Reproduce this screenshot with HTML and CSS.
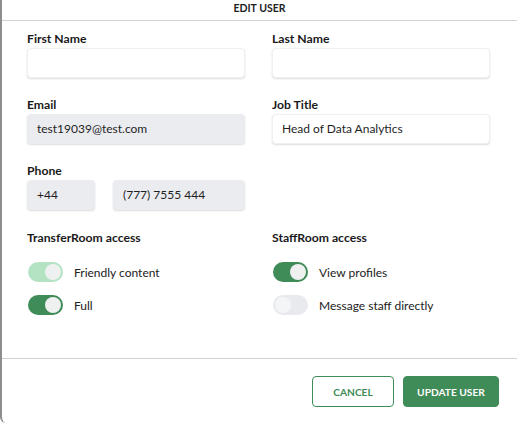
FILE: index.html
```html
<!DOCTYPE html>
<html>
<head>
<meta charset="utf-8">
<link rel="stylesheet" href="styles.css">
</head>
<body>
<div class="modal">
  <div class="header">EDIT USER</div>
  <div class="form">
    <div class="row">
      <div class="field">
        <div class="label">First Name</div>
        <div class="input"></div>
      </div>
      <div class="field">
        <div class="label">Last Name</div>
        <div class="input"></div>
      </div>
    </div>
    <div class="row">
      <div class="field">
        <div class="label">Email</div>
        <div class="input disabled">test19039@test.com</div>
      </div>
      <div class="field">
        <div class="label">Job Title</div>
        <div class="input">Head of Data Analytics</div>
      </div>
    </div>
    <div class="row">
      <div class="field">
        <div class="label">Phone</div>
        <div class="phone">
          <div class="input disabled code">+44</div>
          <div class="input disabled number">(777) 7555 444</div>
        </div>
      </div>
      <div class="field"></div>
    </div>
    <div class="row access">
      <div class="field">
        <div class="label">TransferRoom access</div>
        <div class="toggles">
          <div class="toggle-row"><span class="toggle on light"><span class="knob"></span></span><span class="tlabel">Friendly content</span></div>
          <div class="toggle-row"><span class="toggle on"><span class="knob"></span></span><span class="tlabel">Full</span></div>
        </div>
      </div>
      <div class="field">
        <div class="label">StaffRoom access</div>
        <div class="toggles">
          <div class="toggle-row"><span class="toggle on"><span class="knob"></span></span><span class="tlabel">View profiles</span></div>
          <div class="toggle-row"><span class="toggle off"><span class="knob"></span></span><span class="tlabel">Message staff directly</span></div>
        </div>
      </div>
    </div>
  </div>
  <div class="footer">
    <button class="btn cancel">CANCEL</button>
    <button class="btn primary">UPDATE USER</button>
  </div>
</div>
</body>
</html>
```

FILE: styles.css
```css
* { box-sizing: border-box; }
html, body { margin: 0; padding: 0; background: #ffffff; }
body {
  font-family: Lato, "Open Sans", "Liberation Sans", sans-serif;
  color: #1f1f1f;
  width: 517px;
  height: 423px;
  overflow: hidden;
}
.modal {
  height: 423px;
  border-left: 2px solid #8d8d8d;
  border-bottom-left-radius: 6px;
  display: flex;
  flex-direction: column;
}
.header {
  height: 21px;
  border-bottom: 1px solid #d2d2d2;
  text-align: center;
  font-size: 10.5px;
  font-weight: 700;
  line-height: 17px;
  color: #222;
}
.form {
  padding: 11px 27px 0 25px;
  display: flex;
  flex-direction: column;
  gap: 20px;
  flex: 1;
}
.row {
  display: flex;
  gap: 27px;
}
.row.access { margin-top: 1px; }
.field {
  width: 218px;
}
.label {
  font-size: 12.2px;
  font-weight: 700;
  line-height: 14px;
  margin-bottom: 2px;
  color: #1a1a1a;
}
.input {
  height: 30px;
  border-radius: 4px;
  background: #fff;
  border: 1px solid #f0f0f0;
  box-shadow: 0 1px 2px rgba(0,0,0,0.14);
  font-size: 12px;
  line-height: 28px;
  padding-left: 9px;
  color: #1f1f1f;
}
.input.disabled {
  background: #ebecef;
  border-color: #ebecef;
}
.phone {
  display: flex;
  gap: 18px;
}
.code { width: 68px; }
.number { width: 132px; }
.toggles {
  margin-top: 17px;
  display: flex;
  flex-direction: column;
  gap: 13px;
}
.toggle-row {
  display: flex;
  align-items: center;
  height: 20px;
}
.toggle {
  width: 35px;
  height: 20px;
  border-radius: 10px;
  background: #3f8c58;
  display: flex;
  align-items: center;
  padding: 0 2px;
  margin-left: 1px;
  margin-right: 11px;
}
.toggle.light { background: #b4e3c3; }
.toggle.off { background: #e9eaed; justify-content: flex-start; }
.toggle.on { justify-content: flex-end; }
.knob {
  width: 16px;
  height: 16px;
  border-radius: 50%;
  background: #eef1ef;
}
.toggle.off .knob { background: #f4f5f6; }
.tlabel {
  font-size: 12px;
  color: #222;
}
.footer {
  border-top: 1px solid #d2d2d2;
  height: 65px;
  display: flex;
  justify-content: flex-end;
  align-items: flex-start;
  padding: 17px 18px 0 0;
  gap: 9px;
}
.btn {
  height: 31px;
  border-radius: 4px;
  font-family: Lato, "Open Sans", "Liberation Sans", sans-serif;
  font-size: 10.2px;
  font-weight: 700;
  cursor: pointer;
}
.cancel {
  width: 82px;
  background: #fff;
  border: 1px solid #3f8c58;
  color: #3f8c58;
}
.primary {
  width: 96px;
  background: #3f8c58;
  border: 1px solid #3f8c58;
  color: #fff;
}
```
